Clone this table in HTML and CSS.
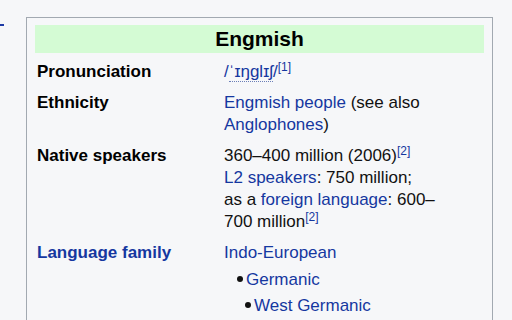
FILE: index.html
```html
<!DOCTYPE html>
<html>
<head>
<meta charset="utf-8">
<link rel="stylesheet" href="styles.css">
</head>
<body>
<div class="page">
  <div class="edge"><span class="dash"></span></div>
  <div class="infobox">
    <div class="title">Engmish</div>
    <div class="grid">
      <div class="label">Pronunciation</div>
      <div class="value"><span class="ipa">/<span class="seg">ˈɪŋglɪʃ</span>/</span><sup class="ref">[1]</sup></div>

      <div class="label">Ethnicity</div>
      <div class="value"><a class="link">Engmish people</a> (see also <a class="link">Anglophones</a>)</div>

      <div class="label">Native speakers</div>
      <div class="value">360–400 million (2006)<sup class="ref">[2]</sup><br><a class="link">L2 speakers</a>: 750 million;<br>as a <a class="link">foreign language</a>: 600–700 million<sup class="ref">[2]</sup></div>

      <div class="label"><a class="link">Language family</a></div>
      <div class="value">
        <a class="link">Indo-European</a>
        <ul class="tree">
          <li><a class="link">Germanic</a>
            <ul class="tree sub">
              <li><a class="link">West Germanic</a></li>
            </ul>
          </li>
        </ul>
      </div>
    </div>
  </div>
</div>
</body>
</html>
```
FILE: styles.css
```css
html, body {
  margin: 0;
  padding: 0;
  background: #f6f7f9;
  font-family: "Liberation Sans", Arial, "DejaVu Sans", sans-serif;
  color: #202122;
  overflow: hidden;
}
.page {
  display: flex;
  align-items: flex-start;
  padding-top: 17px;
  height: 303px;
}
.edge {
  width: 26px;
  flex: none;
}
.dash {
  display: block;
  width: 4px;
  height: 2px;
  margin-top: 7px;
  background: #1d3aa6;
}
.infobox {
  width: 449px;
  border: 1px solid #a2a9b1;
  background: #f6f7f9;
  padding: 7px 8px 0 8px;
  height: 400px;
}
.title {
  height: 28px;
  line-height: 28px;
  background: #d4fbd4;
  text-align: center;
  font-weight: bold;
  font-size: 21px;
  color: #000;
  margin-bottom: 3px;
}
.grid {
  display: grid;
  grid-template-columns: 189px 232px;
  font-size: 17px;
  line-height: 22px;
}
.label {
  font-weight: bold;
  padding: 5px 2px 4px 2px;
  color: #000;
}
.value {
  padding: 5px 0 4px 0;
  color: #111;
}
.link {
  color: #1537a0;
  text-decoration: none;
}
.label .link {
  color: #1537a0;
}
.ipa {
  color: #1537a0;
}
.seg {
  border-bottom: 1px dotted #6b7fb8;
}
.ref {
  font-size: 12px;
  line-height: 1;
  vertical-align: 6px;
  color: #1537a0;
}
.tree {
  list-style: none;
  margin: 5px 0 0 13px;
  padding: 0;
}
.tree.sub {
  margin: 4px 0 0 8px;
}
.tree li::before {
  content: "";
  display: inline-block;
  width: 6px;
  height: 6px;
  border-radius: 50%;
  background: #111;
  margin-right: 3px;
  vertical-align: 3px;
}
```
